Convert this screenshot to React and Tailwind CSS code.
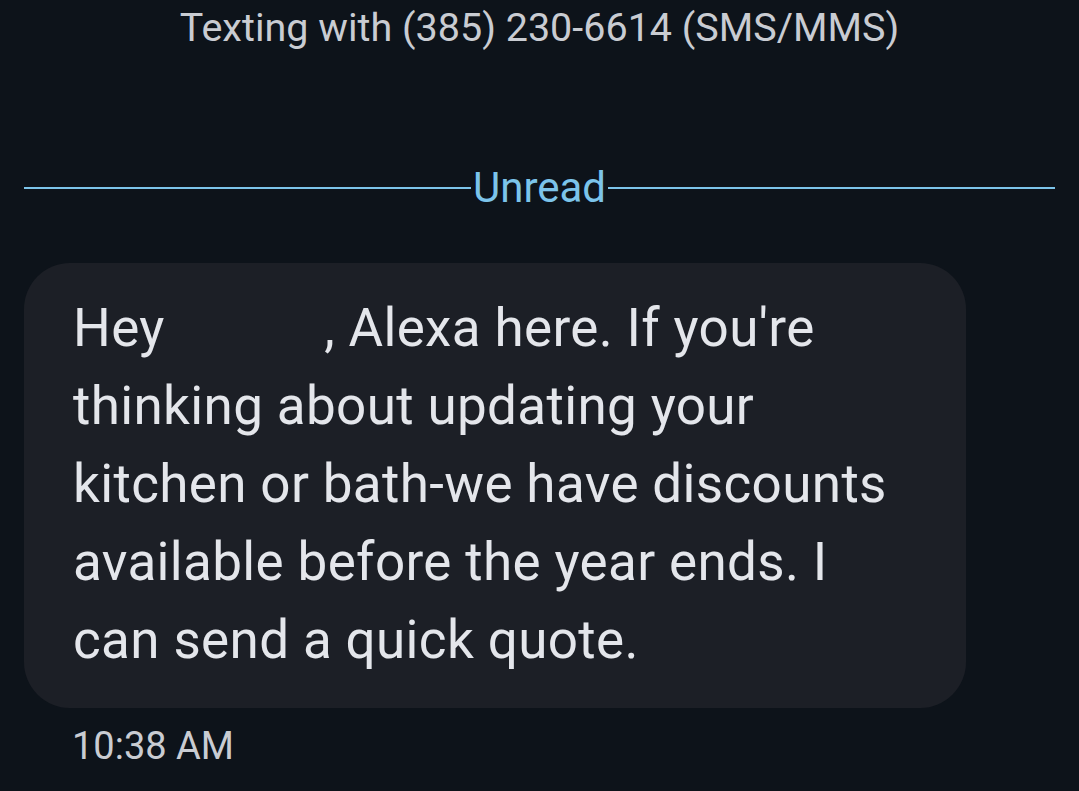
const App = () => {
  return (
    <main className="min-h-screen w-full bg-[#0d131a] font-['Roboto',sans-serif] overflow-hidden">
      {/* Header */}
      <div className="pt-[4px] text-center text-[39.5px] leading-[48px] text-[#c9ccd2]">
        Texting with (385) 230-6614 (SMS/MMS)
      </div>

      {/* Unread divider */}
      <div className="mt-[113px] flex items-center px-[24px]">
        <div className="h-[2px] flex-1 bg-[#7cc4ea]"></div>
        <span className="px-[2px] text-[42px] leading-[46px] text-[#7cc4ea]">Unread</span>
        <div className="h-[2px] flex-1 bg-[#7cc4ea]"></div>
      </div>

      {/* Message bubble */}
      <div className="mt-[52px] ml-[24px] w-[942px] rounded-[46px] bg-[#1c1f26] pl-[49px] pr-[30px] pt-[26px] pb-[29px]">
        <p className="text-[53px] leading-[78px] tracking-[0.35px] text-[#e4e6eb]">
          Hey <span className="inline-block w-[146px]"></span>, Alexa here. If you're
          <br />
          thinking about updating your
          <br />
          kitchen or bath-we have discounts
          <br />
          available before the year ends. I
          <br />
          can send a quick quote.
        </p>
      </div>

      {/* Timestamp */}
      <div className="mt-[16px] ml-[72px] text-[38px] leading-[44px] text-[#c9ccd2]">10:38 AM</div>
    </main>
  );
};

export default App;
